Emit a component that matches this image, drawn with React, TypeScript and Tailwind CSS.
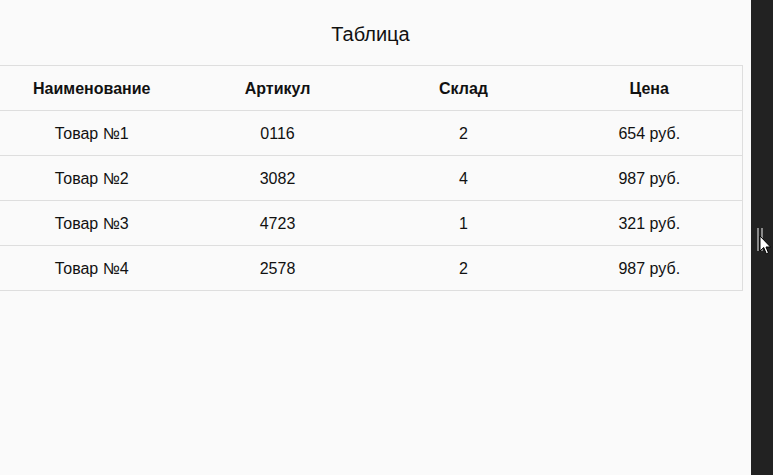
const rows = [
    { name: "Товар №1", sku: "0116", stock: 2, price: 654 },
    { name: "Товар №2", sku: "3082", stock: 4, price: 987 },
    { name: "Товар №3", sku: "4723", stock: 1, price: 321 },
    { name: "Товар №4", sku: "2578", stock: 2, price: 987 },
];

const headers = ["Наименование", "Артикул", "Склад", "Цена"];

const App = () => {
    return (
        <div className="flex h-[475px] w-[773px] overflow-hidden font-['Liberation_Sans',Arial,sans-serif]">
            <div className="w-[751px] overflow-hidden bg-[#fafafa]">
                <div className="-ml-[2px] w-[745px]">
                    <h1 className="pt-[23px] text-center text-[20px] leading-[23px] text-[#111]">Таблица</h1>
                    <table className="mt-[19px] w-full table-fixed border-collapse border border-[#dedede] text-[16px] text-[#111]">
                        <thead>
                            <tr className="h-[45px]">
                                {headers.map((h) => (
                                    <th key={h} className="pt-[1px] text-center font-bold">
                                        {h}
                                    </th>
                                ))}
                            </tr>
                        </thead>
                        <tbody>
                            {rows.map((r) => (
                                <tr key={r.name} className="h-[45px] border-t border-[#dedede]">
                                    <td className="pt-[2px] text-center">{r.name}</td>
                                    <td className="pt-[2px] text-center">{r.sku}</td>
                                    <td className="pt-[2px] text-center">{r.stock}</td>
                                    <td className="pt-[2px] text-center">{r.price} руб.</td>
                                </tr>
                            ))}
                        </tbody>
                    </table>
                </div>
            </div>
            {/* полоса ресайза справа */}
            <div className="relative flex-1 bg-[#222222]">
                <div className="absolute left-[6px] top-[228px] flex gap-[2px]">
                    <div className="h-[23px] w-[2px] bg-[#8a8a8a]" />
                    <div className="h-[23px] w-[2px] bg-[#8a8a8a]" />
                </div>
                <svg className="absolute left-[8px] top-[235px]" width="13" height="22" viewBox="0 0 13 22">
                    <path d="M1 1 L1 16 L4.7 12.5 L7.3 18.8 L9.5 17.9 L7 12 L11.5 12 Z" fill="#fff" stroke="#000" strokeWidth="1" />
                </svg>
            </div>
        </div>
    );
};

export default App;
